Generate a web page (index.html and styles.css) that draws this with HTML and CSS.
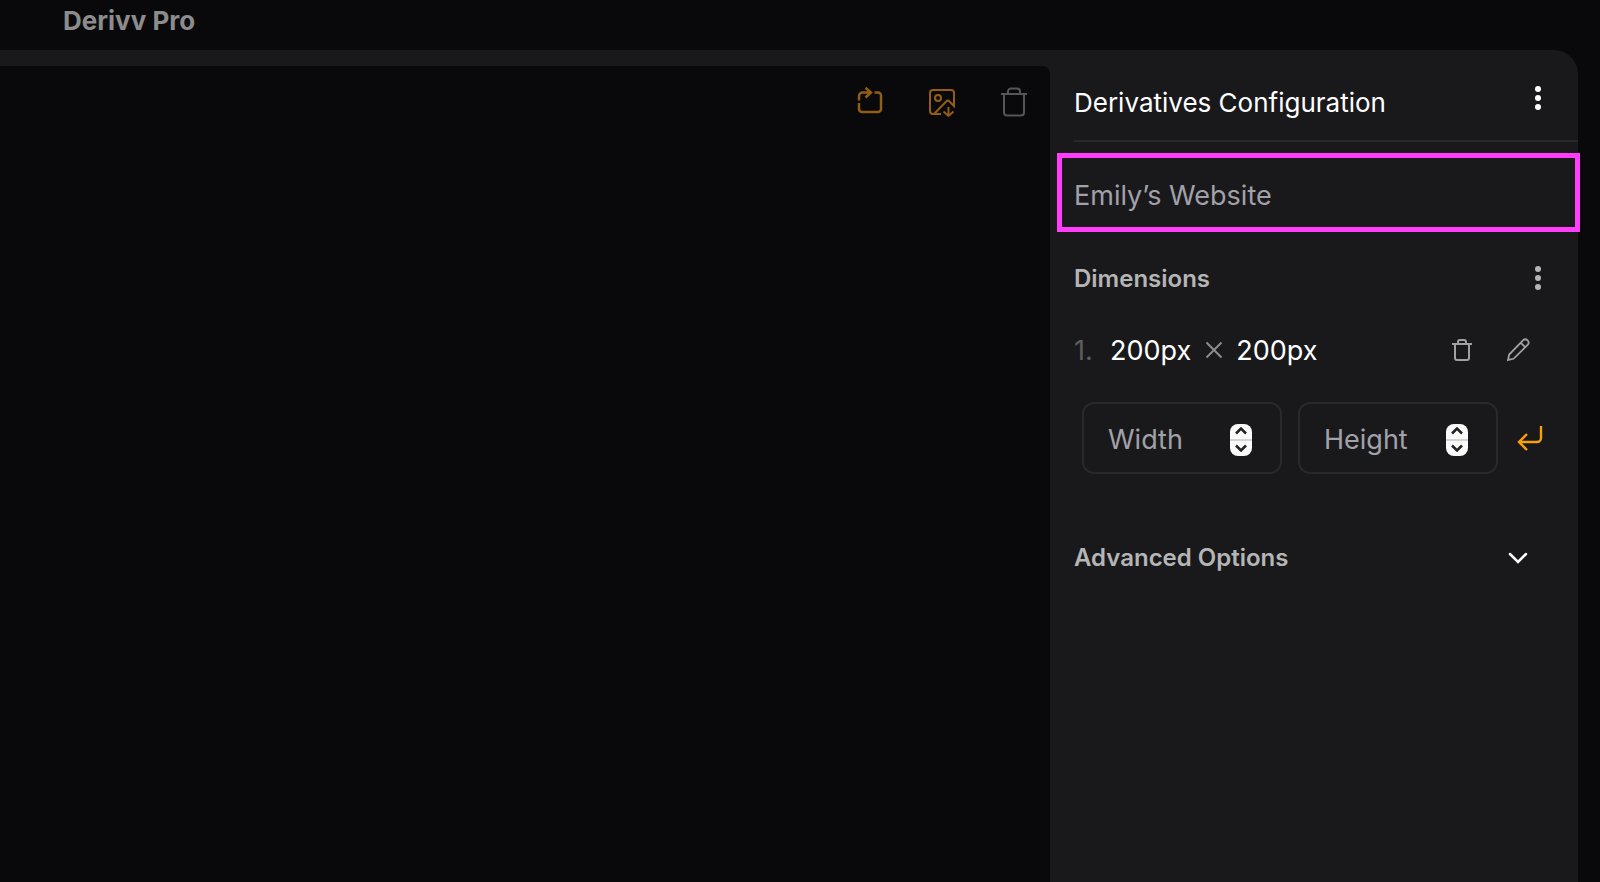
FILE: index.html
```html
<!DOCTYPE html>
<html lang="en">
<head>
    <meta charset="UTF-8">
    <meta name="viewport" content="width=device-width, initial-scale=1.0">
    <title>Derivv Pro</title>
    <link rel="stylesheet" href="styles.css">
</head>
<body>
    <header class="topbar">
        <h1 class="brand">Derivv Pro</h1>
    </header>

    <main class="panel">
        <section class="canvas">
            <div class="toolbar">
                <button class="icon-btn amber" type="button" aria-label="Rotate" disabled>
                    <svg width="28" height="32" viewBox="0 0 28 32" fill="none" stroke="currentColor" stroke-width="2.500">
                        <path d="M3 13.500V9a3.500 3.500 0 0 1 3.500-3.500H15M9.500 .800l5.500 4.700-5.500 5M18.500 5.500H22a3 3 0 0 1 3 3V22a3 3 0 0 1-3 3H6a3 3 0 0 1-3-3v-6"/>
                    </svg>
                </button>
                <button class="icon-btn amber" type="button" aria-label="Download image" disabled>
                    <svg width="28" height="32" viewBox="0 0 28 32" fill="none" stroke="currentColor" stroke-width="2">
                        <path d="M13 27H5a3 3 0 0 1-3-3V6a3 3 0 0 1 3-3h18a3 3 0 0 1 3 3v13l-4.800-4.800a2 2 0 0 0-2.800 0L6.500 26.500"/>
                        <circle cx="10" cy="11" r="3"/>
                        <path d="M20.500 20v9M15.500 24.500l5 4.500 5-4.500"/>
                    </svg>
                </button>
                <button class="icon-btn gray" type="button" aria-label="Delete image" disabled>
                    <svg width="28" height="32" viewBox="0 0 28 32" fill="none" stroke="currentColor" stroke-width="2">
                        <path d="M1 7h26M4 7v18.500a3 3 0 0 0 3 3h14a3 3 0 0 0 3-3V7M8 7V4.500a3 3 0 0 1 3-3h6a3 3 0 0 1 3 3V7"/>
                    </svg>
                </button>
            </div>
        </section>

        <aside class="sidebar">
            <div class="row config-head">
                <h2>Derivatives Configuration</h2>
                <button class="icon-btn white" type="button" aria-label="Configuration menu">
                    <svg width="8" height="26" viewBox="0 0 8 26" fill="currentColor">
                        <circle cx="4" cy="4" r="3"/><circle cx="4" cy="13" r="3"/><circle cx="4" cy="22" r="3"/>
                    </svg>
                </button>
            </div>

            <div class="config-name">
                <input type="text" aria-label="Configuration name" placeholder="Emily’s Website">
            </div>

            <div class="row section-head">
                <h3>Dimensions</h3>
                <button class="icon-btn light" type="button" aria-label="Dimensions menu">
                    <svg width="8" height="26" viewBox="0 0 8 26" fill="currentColor">
                        <circle cx="4" cy="3" r="3"/><circle cx="4" cy="12" r="3"/><circle cx="4" cy="21" r="3"/>
                    </svg>
                </button>
            </div>

            <div class="row dimension">
                <span class="index">1.</span>
                <span>200px</span>
                <svg class="times" width="18" height="18" viewBox="0 0 18 18" fill="none" stroke="currentColor" stroke-width="2">
                    <path d="M1.500 1.500l15 15M16.500 1.500l-15 15"/>
                </svg>
                <span>200px</span>
                <div class="actions">
                    <button class="icon-btn" type="button" aria-label="Delete dimension">
                        <svg width="20" height="24" viewBox="0 0 20 24" fill="none" stroke="currentColor" stroke-width="2">
                            <path d="M0 6h20M3 6v14a2 2 0 0 0 2 2h10a2 2 0 0 0 2-2V6M6 6V4a2 2 0 0 1 2-2h4a2 2 0 0 1 2 2v2"/>
                        </svg>
                    </button>
                    <button class="icon-btn" type="button" aria-label="Edit dimension">
                        <svg width="24" height="24" viewBox="0 0 24 24" fill="none" stroke="currentColor" stroke-width="1.800">
                            <path d="M2 22l1.200-5.500L17 2.400a3.200 3.200 0 0 1 4.600 4.500L7.500 20.800zM14.800 4.800l4.400 4.400"/>
                        </svg>
                    </button>
                </div>
            </div>

            <form class="add-dimension">
                <div class="field">
                    <input type="number" aria-label="Width" placeholder="Width">
                    <div class="stepper">
                        <button type="button" aria-label="Increase width"><svg width="12" height="8" viewBox="0 0 12 8"><path d="M1 6.500l5-5 5 5"/></svg></button>
                        <button type="button" aria-label="Decrease width"><svg width="12" height="8" viewBox="0 0 12 8"><path d="M1 1.500l5 5 5-5"/></svg></button>
                    </div>
                </div>
                <div class="field">
                    <input type="number" aria-label="Height" placeholder="Height">
                    <div class="stepper">
                        <button type="button" aria-label="Increase height"><svg width="12" height="8" viewBox="0 0 12 8"><path d="M1 6.500l5-5 5 5"/></svg></button>
                        <button type="button" aria-label="Decrease height"><svg width="12" height="8" viewBox="0 0 12 8"><path d="M1 1.500l5 5 5-5"/></svg></button>
                    </div>
                </div>
                <button class="icon-btn enter" type="submit" aria-label="Add dimension">
                    <svg width="26" height="26" viewBox="0 0 26 26" fill="none" stroke="currentColor" stroke-width="2.400">
                        <path d="M24 1v12a4 4 0 0 1-4 4H2M10 9l-8 8 8 8"/>
                    </svg>
                </button>
            </form>

            <button class="row advanced" type="button">
                <span>Advanced Options</span>
                <svg width="20" height="12" viewBox="0 0 20 12" fill="none" stroke="currentColor" stroke-width="2.500">
                    <path d="M2 2l8 8 8-8" stroke-linecap="round"/>
                </svg>
            </button>
        </aside>
    </main>
</body>
</html>
```
FILE: styles.css
```css
* {
    box-sizing: border-box;
}
body {
    margin: 0;
    min-height: 100vh;
    display: flex;
    flex-direction: column;
    background-color: #09090b;
    color: #ffffff;
    font-family: Inter, "Liberation Sans", sans-serif;
}
h1, h2, h3 {
    margin: 0;
}
button, input {
    font-family: inherit;
    color: inherit;
    background: none;
    border: none;
    padding: 0;
}
button {
    cursor: pointer;
}
svg {
    display: block;
}
.topbar {
    height: 50px;
    padding: 5px 63px;
}
.brand {
    font-size: 26px;
    line-height: 32px;
    font-weight: 700;
    color: #8c8c8d;
}

.panel {
    flex: 1;
    display: flex;
    margin-right: 22px;
    padding-top: 16px;
    background-color: #19191b;
    border-top-right-radius: 24px;
}
.canvas {
    flex: 1;
    background-color: #09090b;
    border-top-right-radius: 8px;
}
.toolbar {
    display: flex;
    justify-content: flex-end;
    gap: 44px;
    padding: 21px 22px;
}
.icon-btn {
    color: #a1a1a3;
}
.amber {
    color: #935d12;
}
.gray {
    color: #55555a;
}
.white {
    color: #ffffff;
}
.light {
    color: #b5b5b6;
}

.sidebar {
    width: 528px;
    padding-left: 24px;
}
.row {
    display: flex;
    align-items: center;
    padding-right: 36px;
}
.config-head {
    align-items: flex-start;
    justify-content: space-between;
    height: 76px;
    padding-top: 19px;
    border-bottom: 2px solid #29292b;
}
.config-head h2 {
    font-size: 26px;
    line-height: 36px;
    font-weight: 400;
}
/* active field outline */
.config-name {
    margin: 11px -2px 0 -17px;
    border: 5px solid #ff3dfb;
}
.config-name input {
    display: block;
    width: 100%;
    height: 69px;
    padding: 6px 12px 0;
    font-size: 27px;
}
input::placeholder {
    color: #a1a1aa;
    opacity: 1;
}
.section-head {
    justify-content: space-between;
    margin-top: 30px;
    height: 34px;
}
.section-head h3, .advanced {
    font-size: 24px;
    line-height: 34px;
    font-weight: 600;
    color: #b5b5b6;
}
.dimension {
    height: 40px;
    margin-top: 34px;
    font-size: 27px;
}
.index {
    width: 36px;
    color: #5e5e60;
}
.times {
    margin: 0 13px 0 14px;
    color: #8c8c8d;
}
.actions {
    display: flex;
    gap: 34px;
    margin-left: auto;
    padding-right: 12px;
}
.add-dimension {
    display: flex;
    align-items: center;
    gap: 16px;
    margin-top: 32px;
    padding: 0 35px 0 8px;
}
.field {
    flex: 1;
    min-width: 0;
    display: flex;
    align-items: center;
    height: 72px;
    padding: 3px 28px 0 24px;
    border: 2px solid #29292b;
    border-radius: 12px;
}
.field input {
    flex: 1;
    min-width: 0;
    height: 100%;
    font-size: 27px;
    appearance: textfield;
    -moz-appearance: textfield;
}
.field input::-webkit-inner-spin-button {
    display: none;
}
.stepper {
    width: 22px;
    height: 32px;
    display: flex;
    flex-direction: column;
    overflow: hidden;
    border-radius: 8px;
    background-color: #fafafa;
}
.stepper button {
    flex: 1;
    display: flex;
    align-items: center;
    justify-content: center;
}
.stepper button:first-child {
    border-bottom: 2px solid #d4d4d4;
}
.stepper path {
    fill: none;
    stroke: #222222;
    stroke-width: 2.500;
}
.enter {
    margin-left: 3px;
    color: #f99f07;
}
.advanced {
    justify-content: space-between;
    width: 100%;
    margin-top: 67px;
    padding-right: 50px;
}
.advanced svg {
    color: #ffffff;
}
```
